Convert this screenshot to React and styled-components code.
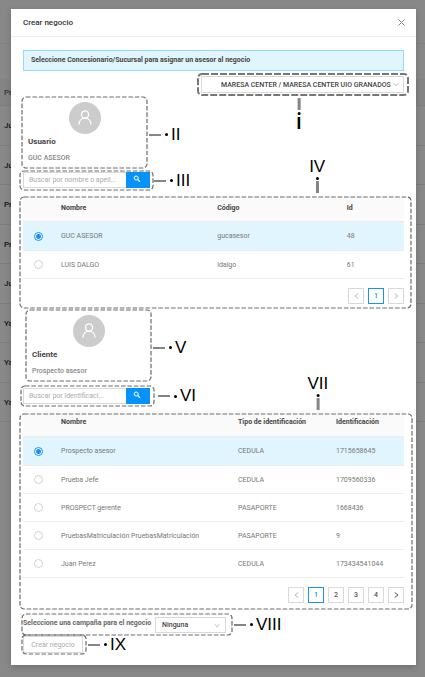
import React from "react";
import styled, { createGlobalStyle, css } from "styled-components";

const GlobalStyle = createGlobalStyle`
  * { box-sizing: border-box; }
  body { margin: 0; background: #888; font-family: Roboto, "Liberation Sans", sans-serif; font-size: 7px; }
  button, input, select { font-family: inherit; font-size: 7px; margin: 0; }
`;

const Page = styled.div`
  display: grid;
  min-height: 100vh;
  background: #888;
`;

const Backdrop = styled.div`
  grid-area: 1 / 1;
  padding-top: 43px;
  color: #111;
  font-size: 8px;
  font-weight: 500;
`;

const BackdropBar = styled.div`
  height: 36px;
  border-top: 1px solid #828282;
`;

const BackdropRow = styled.div`
  display: flex;
  align-items: center;
  height: ${(p) => (p.$head ? 27 : 39)}px;
  padding: 0 4px;
  border-bottom: 1px solid #7e7e7e;
  background: ${(p) => (p.$head ? "#848484" : "transparent")};
  color: ${(p) => (p.$head ? "#333" : "#111")};
  &:nth-child(2n + 3) { height: 40px; }
`;

const Modal = styled.main`
  grid-area: 1 / 1;
  align-self: start;
  margin: 9px 9px 12px 11px;
  background: #fff;
  box-shadow: 0 2px 6px rgba(0, 0, 0, 0.18);
`;

const Header = styled.header`
  display: flex;
  align-items: center;
  justify-content: space-between;
  height: 28px;
  padding: 0 11px 0 12px;
  border-bottom: 1px solid #ececec;
`;

const Title = styled.h1`
  margin: 0;
  font-size: 8px;
  font-weight: 500;
  color: #333;
`;

const CloseButton = styled.button`
  display: flex;
  padding: 0;
  border: 0;
  background: none;
  color: #888;
`;

const Body = styled.div`
  display: flex;
  flex-direction: column;
  align-items: flex-start;
  padding: 13px 12px 12px;
`;

const Alert = styled.p`
  width: 100%;
  height: 21px;
  margin: 0 0 5px;
  padding: 0 7px;
  border: 1px solid #91dcfb;
  background: #e1f5fe;
  color: #444;
  font-weight: 700;
  line-height: 18px;
`;

const Part = styled.div`
  position: relative;
  width: ${(p) => p.$width || "100%"};
  margin: ${(p) => p.$margin || 0};
`;

const Frame = styled.div`
  position: absolute;
  inset: ${(p) => p.$inset};
  pointer-events: none;
`;

const FrameLine = styled.svg`
  display: block;
  width: 100%;
  height: 100%;
  overflow: visible;
`;

const sideCallout = css`
  left: 100%;
  top: ${(p) => (p.$low ? 4 : 0)}px;
  bottom: 0;
  margin-left: ${(p) => p.$gap}px;
  flex-direction: row;
`;

const aboveCallout = css`
  bottom: 100%;
  left: ${(p) => p.$at};
  margin-bottom: ${(p) => p.$gap}px;
  flex-direction: column-reverse;
  transform: translateX(-50%);
`;

const belowCallout = css`
  top: 100%;
  left: ${(p) => p.$at};
  margin-top: 3px;
  flex-direction: column;
  transform: translateX(-50%);
`;

const places = { side: sideCallout, above: aboveCallout, below: belowCallout };

const Callout = styled.div`
  position: absolute;
  display: flex;
  align-items: center;
  ${(p) => places[p.$place]}
`;

const Lead = styled.span`
  flex: none;
  width: ${(p) => (p.$upright ? 3 : 12)}px;
  height: ${(p) => (p.$upright ? 12 : 2)}px;
  background: #858585;
`;

const Dot = styled.span`
  flex: none;
  width: 3px;
  height: 3px;
  margin: ${(p) => (p.$upright ? "2px 0 1px" : "0 3px 0 4px")};
  border-radius: 50%;
  background: #000;
`;

const Numeral = styled.span`
  color: #000;
  font-family: "Liberation Sans", sans-serif;
  font-size: 17px;
  font-weight: ${(p) => (p.$bold ? 700 : 400)};
  line-height: 16px;
`;

function Marker({ inset, place, gap = 2, at, text, strong, low }) {
  const upright = place !== "side";
  return (
    <Frame $inset={inset}>
      <FrameLine aria-hidden="true">
        <rect
          width="100%"
          height="100%"
          rx="4"
          fill="none"
          stroke={strong ? "#777" : "#6c6c6c"}
          strokeWidth={strong ? 2 : 1.2}
          strokeDasharray={strong ? "7 2" : "4.6 1.8"}
        />
      </FrameLine>
      <Callout $place={place} $gap={gap} $at={at} $low={low}>
        <Lead $upright={upright} />
        <Dot $upright={upright} />
        <Numeral $bold={strong}>{text}</Numeral>
      </Callout>
    </Frame>
  );
}

const SelectBox = styled.div`
  display: flex;
  align-items: center;
  height: ${(p) => (p.$tall ? 17 : 16)}px;
  padding-right: ${(p) => (p.$tall ? 4 : 5)}px;
  border: 1px solid #d9d9d9;
  background: #fff;
  color: #bbb;
`;

const Select = styled.select`
  flex: 1;
  min-width: 0;
  height: 100%;
  padding: 0 0 0 ${(p) => p.$indent}px;
  border: 0;
  appearance: none;
  background: none;
  color: #444;
  outline: none;
  font-weight: 500;
`;

const Card = styled.section`
  height: 71px;
  padding: 5px;
`;

const Avatar = styled.div`
  display: flex;
  align-items: center;
  justify-content: center;
  width: 32px;
  height: 32px;
  margin: 0 auto;
  border-radius: 50%;
  background: #ccc;
  color: #fff;
`;

const CardTitle = styled.h2`
  margin: 3px 0 6px;
  color: #444;
  font-size: 8px;
  font-weight: 700;
  line-height: 10px;
`;

const CardText = styled.p`
  margin: 0;
  color: #888;
  font-weight: 500;
  line-height: 10px;
`;

const SearchForm = styled.form`
  display: flex;
  height: 16px;
`;

const SearchInput = styled.input`
  flex: 1;
  min-width: 0;
  padding: 0 5px;
  border: 1px solid #d9d9d9;
  border-right: 0;
  color: #444;
  outline: none;
  &::placeholder { color: #aaa; opacity: 1; }
`;

const SearchButton = styled.button`
  display: flex;
  align-items: center;
  justify-content: center;
  width: 24px;
  padding: 0 2px 2px 0;
  border: 0;
  background: #0592fb;
  color: #fff;
`;

const Table = styled.table`
  width: 100%;
  table-layout: fixed;
  border-collapse: separate;
  border-spacing: 0;
  text-align: left;
`;

const Col = styled.col`
  width: ${(p) => p.$width};
`;

const HeadCell = styled.th`
  height: ${(p) => p.$height}px;
  padding: 0 0 2px;
  border-bottom: 1px solid #ededed;
  background: #fafafa;
  color: #444;
  font-weight: 700;
  white-space: nowrap;
`;

const Row = styled.tr`
  height: ${(p) => (p.$selected ? 29 : 28)}px;
  background: ${(p) => (p.$selected ? "#e1f5fe" : "#fff")};
`;

const Cell = styled.td`
  padding: 0;
  border-bottom: 1px solid #ececec;
  color: #777;
  white-space: nowrap;
`;

const Radio = styled.input`
  display: block;
  appearance: none;
  width: 9px;
  height: 9px;
  margin: 0 0 0 11px;
  border: 1px solid #d0d0d0;
  border-radius: 50%;
  background: #fff;
  &:checked {
    border-color: #1890ff;
    background: radial-gradient(circle, #1890ff 2px, #fff 3px);
  }
`;

const Pagination = styled.nav`
  display: flex;
  justify-content: flex-end;
  gap: 4px;
  margin-top: 9px;
`;

const PageButton = styled.button`
  display: flex;
  align-items: center;
  justify-content: center;
  width: 16px;
  height: 16px;
  padding: 0;
  border: 1px solid ${(p) => (p.$current ? "#1890ff" : "#d9d9d9")};
  background: #fff;
  color: ${(p) => (p.$current ? "#1890ff" : "#555")};
  font-weight: 500;
  &:disabled { color: #bbb; }
`;

const Campaign = styled.div`
  display: flex;
  align-items: flex-start;
  gap: 2px;
`;

const CampaignLabel = styled.label`
  flex: none;
  width: 130px;
  color: #666;
  font-weight: 700;
  line-height: 12px;
  white-space: nowrap;
`;

const CampaignSelect = styled(SelectBox)`
  flex: 1;
`;

const CreateButton = styled.button`
  display: block;
  width: 100%;
  height: 17px;
  padding: 0;
  border: 1px solid #d9d9d9;
  background: #fff;
  color: #aaa;
`;

const CloseIcon = () => (
  <svg width="7" height="7" viewBox="0 0 7 7" fill="none" stroke="currentColor">
    <path d="M.5.5l6 6M6.5.5l-6 6" />
  </svg>
);

const UserIcon = () => (
  <svg width="16" height="16" viewBox="0 0 16 16" fill="none" stroke="currentColor" strokeWidth="1.3">
    <circle cx="8" cy="4.500" r="3.600" />
    <path d="M2 14.500c.1-3.700 2.600-6.400 6-6.400s5.900 2.700 6 6.400" />
  </svg>
);

const SearchIcon = () => (
  <svg width="8" height="8" viewBox="0 0 8 8" fill="none" stroke="currentColor">
    <circle cx="3.200" cy="3" r="2" />
    <path d="M4.700 4.500L7 6.800" strokeWidth="1.200" />
  </svg>
);

const ChevronDown = () => (
  <svg width="6" height="5" viewBox="0 0 6 5" fill="none" stroke="currentColor" strokeWidth=".8">
    <path d="M.7 1L3 4l2.300-3" />
  </svg>
);

const Chevron = ({ next }) => (
  <svg width="5" height="6" viewBox="0 0 5 6" fill="none" stroke="currentColor">
    <path d={next ? "M.7.5L4 3 .7 5.500" : "M4.300.5L1 3l3.300 2.500"} />
  </svg>
);

function Profile({ title, text }) {
  return (
    <Card>
      <Avatar><UserIcon /></Avatar>
      <CardTitle>{title}</CardTitle>
      <CardText>{text}</CardText>
    </Card>
  );
}

function Search({ label, placeholder }) {
  return (
    <SearchForm onSubmit={(e) => e.preventDefault()}>
      <SearchInput aria-label={label} placeholder={placeholder} />
      <SearchButton aria-label="Buscar"><SearchIcon /></SearchButton>
    </SearchForm>
  );
}

function Records({ name, columns, widths, rows, headHeight }) {
  return (
    <Table>
      <colgroup>
        {widths.map((w, i) => <Col key={i} $width={w} />)}
      </colgroup>
      <thead>
        <tr>
          <HeadCell $height={headHeight} />
          {columns.map((c) => <HeadCell key={c} $height={headHeight}>{c}</HeadCell>)}
        </tr>
      </thead>
      <tbody>
        {rows.map((row, i) => (
          <Row key={row[0]} $selected={i === 0}>
            <Cell><Radio type="radio" name={name} aria-label={row[0]} defaultChecked={i === 0} /></Cell>
            {row.map((v) => <Cell key={v}>{v}</Cell>)}
          </Row>
        ))}
      </tbody>
    </Table>
  );
}

function Pages({ count }) {
  return (
    <Pagination aria-label="Paginación">
      <PageButton disabled aria-label="Anterior"><Chevron /></PageButton>
      {Array.from({ length: count }, (_, i) => (
        <PageButton key={i} $current={i === 0}>{i + 1}</PageButton>
      ))}
      <PageButton disabled={count === 1} aria-label="Siguiente"><Chevron next /></PageButton>
    </Pagination>
  );
}

const backdropRows = ["Ju", "Ju", "Pr", "Pr", "Ju", "Ya", "Ya", "Ya"];

const users = [
  ["GUC ASESOR", "gucasesor", "48"],
  ["LUIS DALGO", "ldalgo", "61"],
];

const clients = [
  ["Prospecto asesor", "CEDULA", "1715658645"],
  ["Prueba Jefe", "CEDULA", "1709560336"],
  ["PROSPECT gerente", "PASAPORTE", "1668436"],
  ["PruebasMatriculación PruebasMatriculación", "PASAPORTE", "9"],
  ["Juan Perez", "CEDULA", "173434541044"],
];

export default function App() {
  return (
    <Page>
      <GlobalStyle />
      <Backdrop aria-hidden="true">
        <BackdropBar />
        <BackdropRow $head>Pr</BackdropRow>
        {backdropRows.map((t, i) => <BackdropRow key={i}>{t}</BackdropRow>)}
      </Backdrop>
      <Modal>
        <Header>
          <Title>Crear negocio</Title>
          <CloseButton aria-label="Cerrar"><CloseIcon /></CloseButton>
        </Header>
        <Body>
          <Alert>Seleccione Concesionario/Sucursal para asignar un asesor al negocio</Alert>

          <Part $width="203px" $margin="0 0 4px auto">
            <SelectBox $tall>
              <Select $indent={19} aria-label="Concesionario/Sucursal">
                <option>MARESA CENTER / MARESA CENTER UIO GRANADOS</option>
              </Select>
              <ChevronDown />
            </SelectBox>
            <Marker inset="-2px -4px -2px -3px" place="below" at="48%" text="I" strong />
          </Part>

          <Part $width="123px" $margin="0 0 4px">
            <Profile title="Usuario" text="GUC ASESOR" />
            <Marker inset="0 -1px" place="side" text="II" low />
          </Part>
          <Part $width="127px" $margin="0 0 8px">
            <Search label="Buscar usuario" placeholder="Buscar por nombre o apell..." />
            <Marker inset="-1px -3px -2px" place="side" gap={1} text="III" />
          </Part>

          <Part $margin="0 0 6px">
            <Records
              name="usuario"
              headHeight={26}
              columns={["Nombre", "Código", "Id"]}
              widths={["38px", "41%", "34%", "auto"]}
              rows={users}
            />
            <Pages count={1} />
            <Marker inset="1px -7px -4px -3px" place="above" gap={4} at="76%" text="IV" />
          </Part>

          <Part $width="123px" $margin="0 0 7px 4px">
            <Profile title="Cliente" text="Prospecto asesor" />
            <Marker inset="0 -1px" place="side" text="V" low />
          </Part>
          <Part $width="127px" $margin="0 0 6px">
            <Search label="Buscar cliente" placeholder="Buscar por identificaci..." />
            <Marker inset="-2px -4px -2px -2px" place="side" gap={4} text="VI" />
          </Part>

          <Part $margin="0 0 14px">
            <Records
              name="cliente"
              headHeight={27}
              columns={["Nombre", "Tipo de identificación", "Identificación"]}
              widths={["38px", "177px", "98px", "auto"]}
              rows={clients}
            />
            <Pages count={4} />
            <Marker inset="4px -8px -6px -3px" place="above" gap={4} at="76%" text="VII" />
          </Part>

          <Part $width="203px" $margin="0 0 3px">
            <Campaign>
              <CampaignLabel htmlFor="campania">Seleccione una campaña para el negocio</CampaignLabel>
              <CampaignSelect>
                <Select id="campania" $indent={6}>
                  <option>Ninguna</option>
                </Select>
                <ChevronDown />
              </CampaignSelect>
            </Campaign>
            <Marker inset="-3px -6px -2px -1px" place="side" text="VIII" />
          </Part>
          <Part $width="60px">
            <CreateButton>Crear negocio</CreateButton>
            <Marker inset="-1px -3px -1px -1px" place="side" text="IX" />
          </Part>
        </Body>
      </Modal>
    </Page>
  );
}
